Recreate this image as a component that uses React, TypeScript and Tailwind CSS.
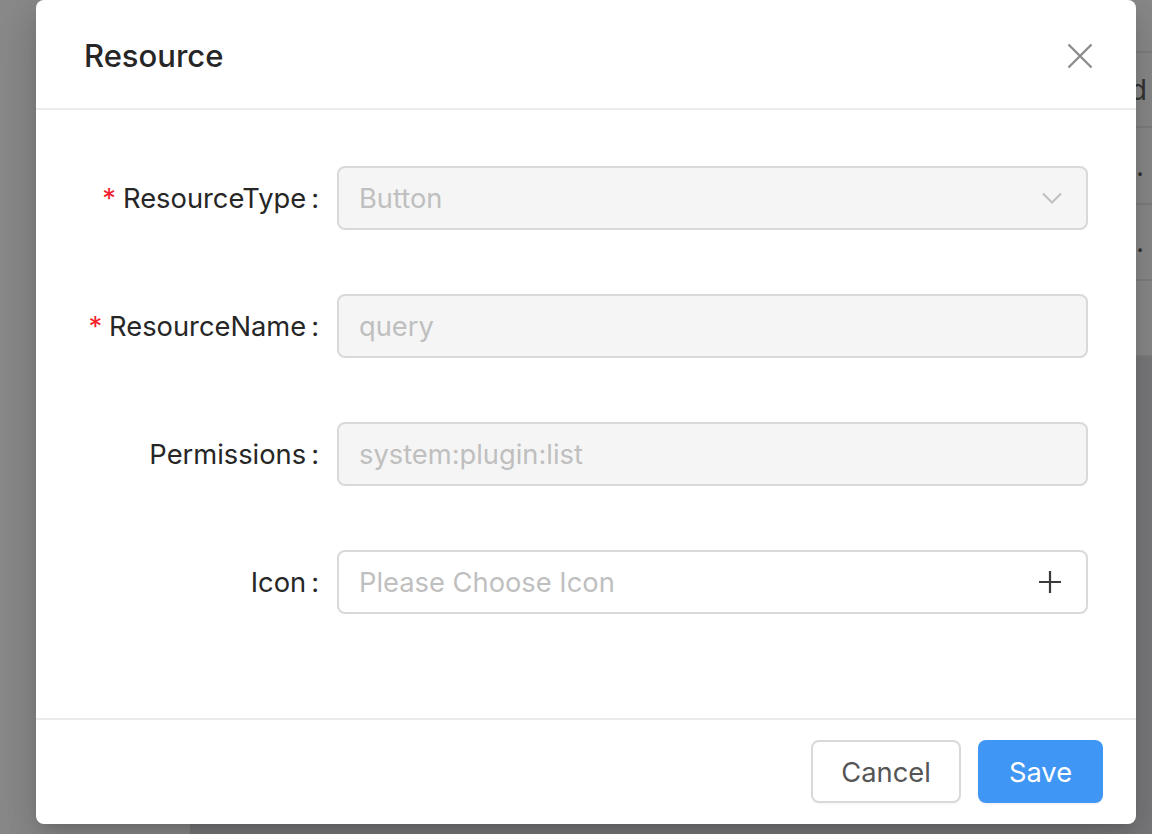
import React from 'react';

const font = "font-['Inter','Liberation_Sans',sans-serif]";

interface FormRowProps {
  label: string;
  required?: boolean;
  children: React.ReactNode;
}

const FormRow: React.FC<FormRowProps> = ({ label, required, children }) => (
  <div className="flex items-center">
    <div className="w-[253px] shrink-0 flex items-center justify-end pr-[18px] pt-[3px] text-[27.3px] text-[#262626]">
      {required && <span className="text-[#f5222d] mr-[7px]">*</span>}
      <span>{label}</span>
      <span className="ml-[5px]">:</span>
    </div>
    <div className="flex-1">{children}</div>
  </div>
);

const Field: React.FC<{ value: string; disabled?: boolean; suffix?: React.ReactNode }> = ({ value, disabled, suffix }) => (
  <div
    className={
      disabled
        ? 'h-[64px] rounded-[8px] border-2 border-[#d9d9d9] bg-[#f5f5f5] pl-[20px] pr-[24px] flex items-center justify-between text-[27.3px] text-[#bfbfbf]'
        : 'h-[64px] rounded-[8px] border-2 border-[#d9d9d9] bg-white pl-[20px] pr-[24px] flex items-center justify-between text-[27.3px] text-[#bfbfbf]'
    }
  >
    <span className="pt-[3px]">{value}</span>
    {suffix}
  </div>
);

const ChevronDown = () => (
  <svg width="20" height="12" viewBox="0 0 20 12" fill="none">
    <path d="M1 1.5 L10 10.5 L19 1.5" stroke="#bfbfbf" strokeWidth="2" />
  </svg>
);

const Plus = () => (
  <svg width="24" height="24" viewBox="0 0 24 24" fill="none">
    <path d="M12 1 V23 M1 12 H23" stroke="#3a3a3a" strokeWidth="2.2" />
  </svg>
);

const Close = () => (
  <svg width="26" height="26" viewBox="0 0 26 26" fill="none">
    <path d="M1.5 1.5 L24.5 24.5 M24.5 1.5 L1.5 24.5" stroke="#8c8c8c" strokeWidth="2.4" />
  </svg>
);

const rows = [
  { h: 'h-[75px]', text: 'Created', pr: 'pr-[5px]' },
  { h: 'h-[77px]', text: '...', pr: 'pr-[8px]' },
  { h: 'h-[76px]', text: '...', pr: 'pr-[8px]' },
  { h: 'h-[76px]', text: '', pr: 'pr-[8px]' },
];

export default function App() {
  return (
    <div className={`relative w-[1152px] h-[834px] overflow-hidden flex bg-[#7a7a7c] ${font}`}>
      {/* page behind the mask */}
      <div className="w-[190px] shrink-0 bg-[#8a8a8a]" />
      <div className="flex-1 flex flex-col">
        <div className="bg-[#8a8a8a] flex flex-col">
          <div className="h-[53px] border-b-2 border-[#7f7f7f]" />
          {rows.map((r, i) => (
            <div
              key={i}
              className={`${r.h} ${r.pr} border-b-2 border-[#7f7f7f] flex items-center justify-end text-[28px] text-[#333333] whitespace-nowrap`}
            >
              {r.text}
            </div>
          ))}
        </div>
      </div>

      {/* modal */}
      <div className="absolute left-[36px] top-0 w-[1100px] h-[824px] bg-white rounded-[8px] shadow-[0_6px_12px_-8px_rgba(0,0,0,0.2),0_12px_32px_0_rgba(0,0,0,0.12),0_18px_56px_16px_rgba(0,0,0,0.08)] flex flex-col">
        <div className="flex items-center justify-between pl-[48px] pr-[43px] pt-[34px] pb-[30px] border-b-2 border-[#ebebeb]">
          <h2 className="text-[31px] leading-[44px] font-medium text-[#262626]">Resource</h2>
          <Close />
        </div>

        <div className="flex flex-col gap-[64px] px-[48px] pt-[56px] pb-[104px]">
          <FormRow label="ResourceType" required>
            <Field value="Button" disabled suffix={<ChevronDown />} />
          </FormRow>
          <FormRow label="ResourceName" required>
            <Field value="query" disabled />
          </FormRow>
          <FormRow label="Permissions">
            <Field value="system:plugin:list" disabled />
          </FormRow>
          <FormRow label="Icon">
            <Field value="Please Choose Icon" suffix={<Plus />} />
          </FormRow>
        </div>

        <div className="flex items-center justify-end gap-[17px] border-t-2 border-[#ebebeb] pt-[20px] pr-[33px]">
          <button className="w-[150px] h-[63px] pt-[3px] rounded-[8px] border-2 border-[#d9d9d9] bg-white text-[27.3px] text-[#555555] shadow-[0_2px_0_rgba(0,0,0,0.02)]">
            Cancel
          </button>
          <button className="w-[125px] h-[63px] pt-[3px] rounded-[8px] bg-[#4096f4] text-[27.3px] text-white shadow-[0_2px_0_rgba(0,0,0,0.04)]">
            Save
          </button>
        </div>
      </div>
    </div>
  );
}
